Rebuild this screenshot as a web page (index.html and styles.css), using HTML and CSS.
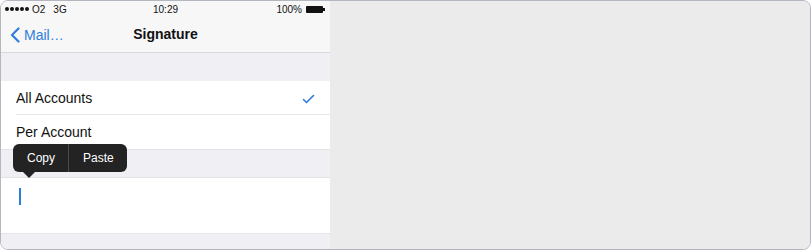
FILE: index.html
```html
<!DOCTYPE html>
<html>
<head>
<meta charset="utf-8">
<link rel="stylesheet" href="styles.css">
</head>
<body>
<div class="frame">
  <div class="phone">
    <div class="status">
      <div class="carrier"><span class="dots"><i></i><i></i><i></i><i></i><i></i></span><span>O2</span><span class="net">3G</span></div>
      <div class="time">10:29</div>
      <div class="batt"><span>100%</span><span class="battery"><b></b></span></div>
    </div>
    <div class="nav">
      <div class="back">
        <svg width="10" height="16" viewBox="0 0 10 16"><path d="M8.5 1.5 L2 8 L8.5 14.5" fill="none" stroke="#2f7dd8" stroke-width="2.2" stroke-linecap="round" stroke-linejoin="round"/></svg>
        <span>Mail…</span>
      </div>
      <div class="title">Signature</div>
    </div>
    <div class="gap g1"></div>
    <div class="group">
      <div class="row sep"><span>All Accounts</span>
        <svg class="check" width="13" height="10" viewBox="0 0 13 10"><path d="M1.5 5.5 L4.5 8.5 L11.5 1.5" fill="none" stroke="#2f7dd8" stroke-width="1.6" stroke-linecap="round" stroke-linejoin="round"/></svg>
      </div>
      <div class="row"><span>Per Account</span></div>
    </div>
    <div class="gap g2"></div>
    <div class="textarea"><span class="cursor"></span></div>
    <div class="gap g3"></div>
    <div class="menu">
      <span class="item">Copy</span><span class="div"></span><span class="item">Paste</span>
      <span class="arrow"></span>
    </div>
  </div>
  <div class="rest"></div>
</div>
</body>
</html>
```
FILE: styles.css
```css
html, body { margin: 0; padding: 0; }
body { width: 811px; height: 250px; font-family: "Liberation Sans", Arial, sans-serif; background: #fff; }
.frame {
  box-sizing: border-box;
  width: 811px; height: 250px;
  border: 1px solid #b3b7bf;
  border-radius: 8px;
  overflow: hidden;
  display: flex;
  background: #ebebeb;
}
.phone {
  position: relative;
  width: 329px;
  display: flex;
  flex-direction: column;
  background: #efeff4;
}
.rest { flex: 1; background: #ebebeb; }
.status {
  height: 16px;
  background: #f7f7f8;
  display: flex;
  align-items: center;
  justify-content: space-between;
  padding: 0 5px 0 4px;
  font-size: 10px;
  color: #111;
  position: relative;
}
.carrier { display: flex; align-items: center; gap: 3px; }
.dots { display: flex; gap: 1px; }
.dots i { width: 4px; height: 4px; border-radius: 50%; background: #111; display: block; }
.net { margin-left: 5px; }
.time { position: absolute; left: 0; right: 0; text-align: center; pointer-events: none; }
.batt { display: flex; align-items: center; gap: 4px; }
.battery { display: flex; align-items: center; }
.battery b { width: 17px; height: 7px; background: #111; display: block; border-radius: 1px; }
.battery::after { content: ""; width: 2px; height: 3px; background: #111; display: block; }
.nav {
  height: 35px;
  background: #f7f7f8;
  border-bottom: 1px solid #d9d9dd;
  display: flex;
  align-items: center;
  position: relative;
}
.back { display: flex; align-items: center; gap: 4px; padding-left: 9px; color: #2f7dd8; font-size: 14px; }
.title { position: absolute; left: 0; right: 0; top: 9px; text-align: center; font-size: 14px; font-weight: bold; color: #111; }
.gap { background: #efeff4; }
.g1 { height: 28px; }
.g2 { height: 27px; border-top: 1px solid #e3e3e6; }
.g3 { flex: 1; border-top: 1px solid #e6e6e9; }
.group { background: #fff; }
.row {
  height: 34px;
  display: flex;
  align-items: center;
  justify-content: space-between;
  padding: 0 15px 0 15px;
  font-size: 14px;
  color: #111;
  position: relative;
}
.row span { margin-top: -1px; }
.row.sep::after { content: ""; position: absolute; left: 15px; right: 0; bottom: 0; height: 1px; background: #e6e6ea; }
.check { margin-top: 1px; }
.textarea { height: 55px; background: #fff; border-top: 1px solid #e3e3e6; position: relative; }
.cursor { position: absolute; left: 18px; top: 10px; width: 2px; height: 17px; background: #2f7dd8; }
.menu {
  position: absolute;
  left: 12px; top: 143px;
  height: 28px;
  background: #232323;
  border-radius: 6px;
  display: flex;
  align-items: center;
  color: #fff;
  font-size: 12px;
}
.menu .item { padding: 0 13px 0 14px; }
.menu .item:last-child { padding: 0 13px 0 13px; }
.menu .div { width: 1px; height: 28px; background: #4a4a4a; }
.menu .arrow {
  position: absolute; left: 10px; top: 28px;
  width: 0; height: 0;
  border-left: 6px solid transparent; border-right: 6px solid transparent;
  border-top: 6px solid #232323;
}
```
